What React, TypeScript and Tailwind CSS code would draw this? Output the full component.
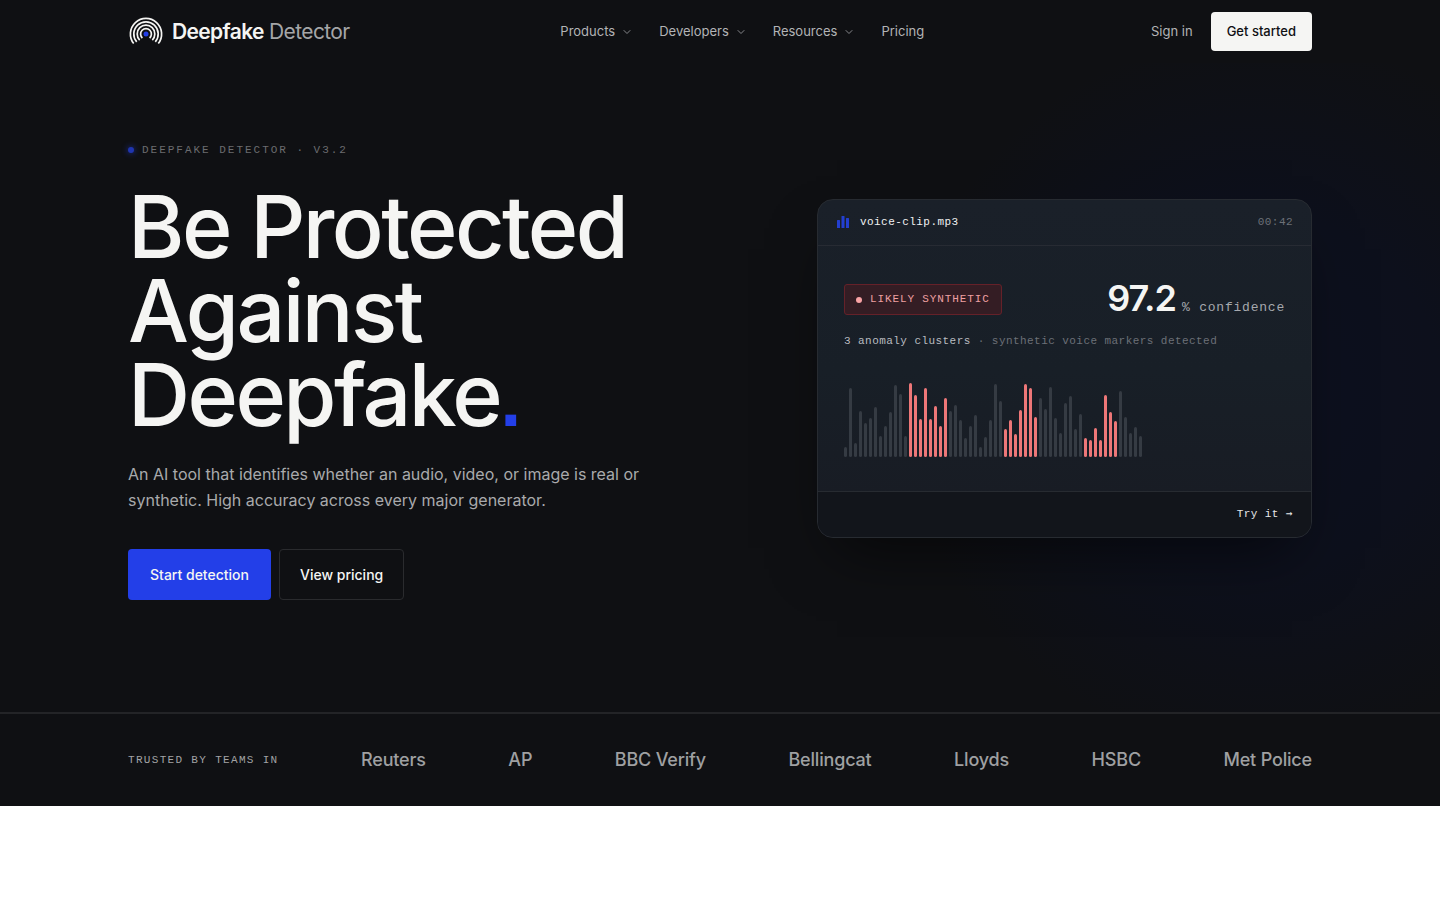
import { ChevronDown } from "lucide-react"

const menus = [
  { name: "Products", open: true },
  { name: "Developers", open: true },
  { name: "Resources", open: true },
  { name: "Pricing", open: false },
]

const teams = ["Reuters", "AP", "BBC Verify", "Bellingcat", "Lloyds", "HSBC", "Met Police"]

// bar heights in px, left to right
const bars = [
  10, 69, 14, 46, 34, 39, 50, 21, 31, 45, 72, 63, 21, 74, 62, 38, 69, 38, 51, 31,
  59, 46, 52, 37, 19, 31, 42, 10, 20, 37, 73, 56, 28, 37, 23, 47, 73, 69, 40, 59,
  48, 70, 39, 24, 54, 61, 28, 43, 19, 17, 29, 17, 62, 45, 36, 66, 40, 24, 30, 21,
]

// index ranges flagged as anomalies
const clusters = [[13, 20], [32, 38], [48, 54]]

const isAnomaly = (i: number) => clusters.some(([from, to]) => i >= from && i <= to)

function Logo() {
  return (
    <svg viewBox="0 0 36 31" className="w-9 h-[31px]" fill="none" aria-hidden="true">
      <g stroke="#f5f5f3" strokeWidth="1.7">
        <path d="M5.7 27.6A15.6 15.6 0 1 1 30.3 27.6" />
        <path d="M8.7 25.9A12.2 12.2 0 1 1 27.3 25.9" />
        <path d="M11.7 24.1A8.8 8.8 0 1 1 24.3 24.1" />
        <path d="M14.4 22A5.4 5.4 0 1 1 21.6 22" />
      </g>
      <circle cx="18" cy="18" r="2.5" fill="#233fe8" />
    </svg>
  )
}

function Header() {
  return (
    <header className="max-w-[1440px] mx-auto px-32 py-3 flex items-center justify-between">
      <a href="#" className="flex items-center gap-2 text-[21px] leading-[31px] tracking-[-0.03em]">
        <Logo />
        <span className="text-[#a5a6a8]">
          <span className="font-semibold text-[#f5f5f3]">Deepfake</span> Detector
        </span>
      </a>

      <nav className="flex items-center gap-[26px] text-[13px] text-[#b3b4b6]">
        {menus.map((m) =>
          m.open ? (
            <button key={m.name} className="flex items-center gap-1.5">
              {m.name}
              <ChevronDown className="size-3 text-[#85868a]" />
            </button>
          ) : (
            <a key={m.name} href="#">{m.name}</a>
          )
        )}
      </nav>

      <div className="flex items-center gap-0.5 text-[13px]">
        <a href="#" className="px-4 text-[#b3b4b6]">Sign in</a>
        <button className="h-[39px] px-4 rounded bg-[#f5f5f3] text-[#0f1013] font-medium">
          Get started
        </button>
      </div>
    </header>
  )
}

function ResultCard() {
  return (
    <div className="rounded-2xl border border-[#272b31] bg-linear-to-b from-[#1a2029] via-[#181f27] to-[#181b23] overflow-hidden shadow-[0_30px_60px_-20px_rgba(0,0,0,0.6)] font-['Liberation_Mono',monospace] text-[11px] tracking-[0.04em]">
      <div className="h-[46px] px-[18px] flex items-center justify-between border-b border-[#272b33]">
        <div className="flex items-center gap-2.5 text-[#f0f1f2]">
          <svg viewBox="0 0 14 14" className="size-3.5" fill="#233fd0" aria-hidden="true">
            <rect x="1" y="5" width="3" height="8" rx="0.6" />
            <rect x="5.5" y="1" width="3" height="12" rx="0.6" />
            <rect x="10" y="3" width="3" height="10" rx="0.6" />
          </svg>
          voice-clip.mp3
        </div>
        <span className="text-[#6c7077]">00:42</span>
      </div>

      <div className="px-[26px] pt-[35px] pb-[34px]">
        <div className="h-[38px] flex items-center justify-between">
          <span className="h-[31px] px-[11px] flex items-center gap-2 rounded-[3px] border border-[#652129] bg-[#341d24] text-[#f0a0a2] tracking-[0.08em]">
            <span className="size-1.5 rounded-full bg-[#f9a3a5]" />
            LIKELY SYNTHETIC
          </span>
          <span className="pb-0.5 flex items-baseline gap-1.5 text-[13px] text-[#a6a9ae] tracking-[0.06em]">
            <span className="font-[Inter,sans-serif] text-[36px] leading-[38px] font-semibold text-[#f5f5f3] tracking-tight">97.2</span>
            % confidence
          </span>
        </div>
        <p className="mt-3 leading-5 text-[#6c7077]">
          <span className="text-[#b9bcc0]">3 anomaly clusters</span> · synthetic voice markers detected
        </p>
        <div className="mt-[30px] h-[76px] flex items-end gap-0.5">
          {bars.map((h, i) => (
            <span
              key={i}
              className={isAnomaly(i) ? "w-[3px] rounded-full bg-[#ee7778]" : "w-[3px] rounded-full bg-[#353b43]"}
              style={{ height: h }}
            />
          ))}
        </div>
      </div>

      <div className="h-[46px] px-[18px] flex items-center justify-end border-t border-[#272b31] bg-[#12151b]">
        <a href="#" className="text-[#e6e7e8]">
          Try it <span className="font-['DejaVu_Sans_Mono',monospace]">→</span>
        </a>
      </div>
    </div>
  )
}

function Hero() {
  return (
    <section className="border-b-2 border-[#232427] bg-[radial-gradient(circle_360px_at_calc(50%_+_540px)_330px,#0d1020_0%,#0d101c_50%,transparent_100%)]">
      <div className="max-w-[1440px] mx-auto px-32 pt-[73px] pb-28 grid grid-cols-[1fr_495px] gap-16 items-center">
        <div>
          <p className="flex items-center gap-2 font-['Liberation_Mono',monospace] text-[11px] leading-7 tracking-[0.18em] text-[#6b6c6f]">
            <span className="size-1.5 rounded-full bg-[#1f35b0] shadow-[0_0_6px_#1f35b0]" />
            DEEPFAKE DETECTOR · V3.2
          </p>
          <h1 className="mt-[21px] text-[86px] leading-[84px] font-medium tracking-[-0.03em]">
            Be Protected<br />
            Against<br />
            Deepfake<span className="font-['Liberation_Sans',sans-serif] text-[76px] leading-[60px] font-bold text-[#233fe8]">.</span>
          </h1>
          <p className="mt-6 max-w-[540px] text-base leading-[26px] text-[#a9aaac]">
            An AI tool that identifies whether an audio, video, or image is real or synthetic. High accuracy across every major generator.
          </p>
          <div className="mt-9 flex gap-2 text-sm font-medium">
            <button className="h-[51px] px-[22px] rounded bg-[#233fe8]">Start detection</button>
            <button className="h-[51px] px-5 rounded border border-[#2a2b2e]">View pricing</button>
          </div>
        </div>
        <ResultCard />
      </div>
    </section>
  )
}

function Trusted() {
  return (
    <section className="max-w-[1440px] mx-auto px-32 h-[92px] flex items-center justify-between">
      <span className="font-['Liberation_Mono',monospace] text-[11px] tracking-[0.12em] text-[#a2a3a5]">
        TRUSTED BY TEAMS IN
      </span>
      {teams.map((t) => (
        <span key={t} className="text-lg font-medium tracking-[-0.01em] text-[#9fa0a2]">{t}</span>
      ))}
    </section>
  )
}

export default function App() {
  return (
    <div className="bg-[#0f1013] text-[#f5f5f3] font-[Inter,sans-serif]">
      <Header />
      <Hero />
      <Trusted />
    </div>
  )
}
